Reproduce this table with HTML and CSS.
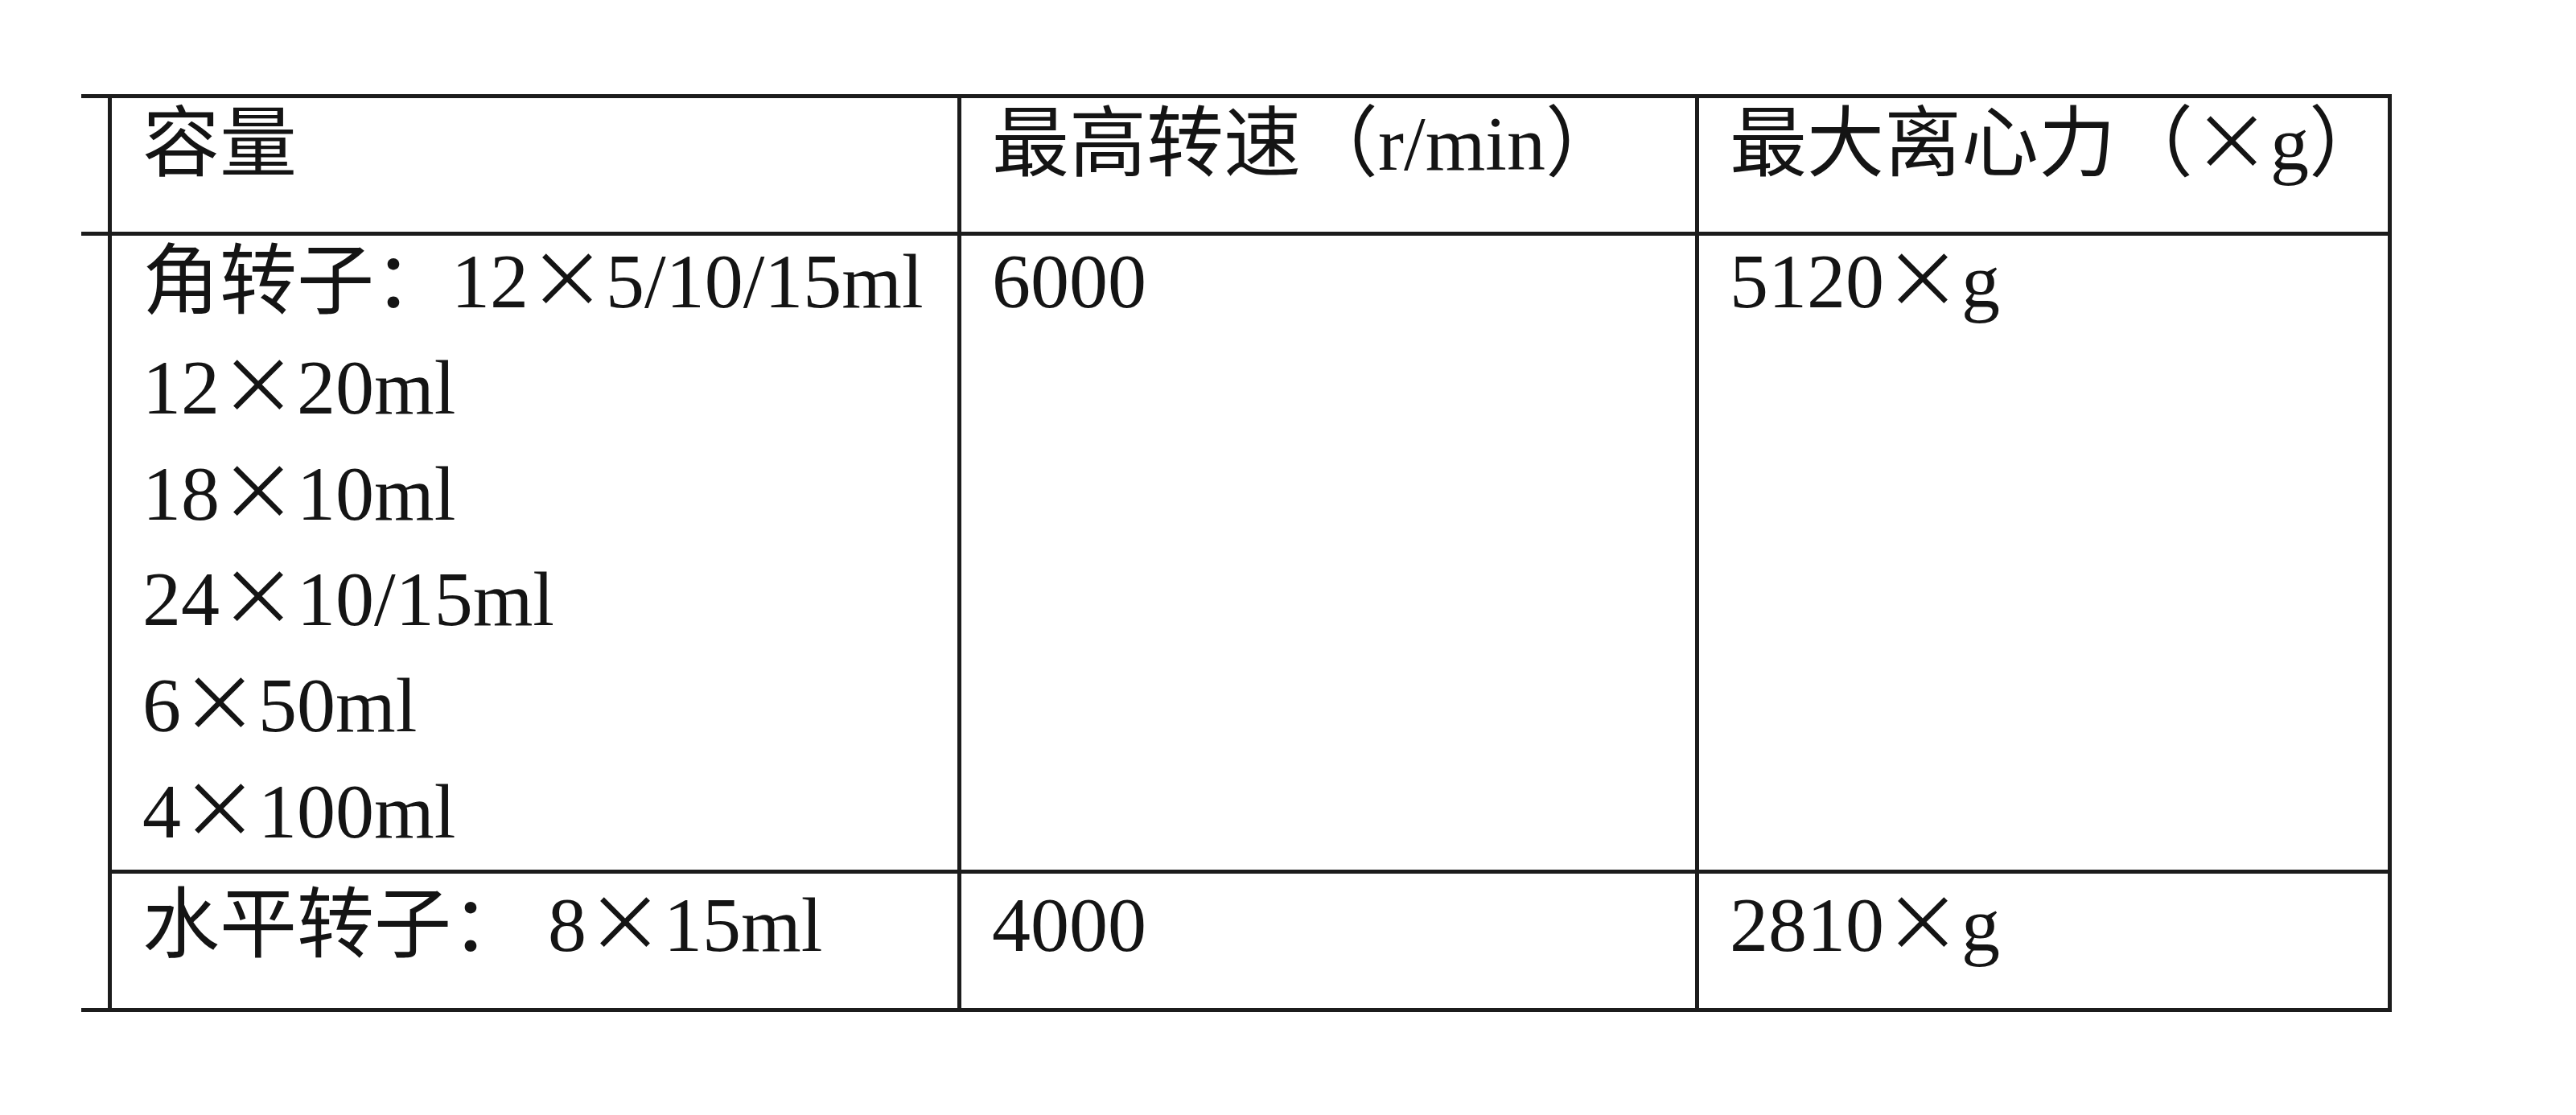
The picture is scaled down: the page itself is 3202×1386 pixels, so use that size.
FILE: index.html
```html
<!DOCTYPE html>
<html lang="zh-CN">
<head>
<meta charset="utf-8">
<title>离心机参数</title>
<link rel="stylesheet" href="styles.css">
</head>
<body>
<div class="grid">
  <div class="stub stub-head"></div>
  <div class="cell head">容量</div>
  <div class="cell head">最高转速（r/min）</div>
  <div class="cell head">最大离心力（<span class="x">×</span>g）</div>

  <div class="stub stub-body"></div>
  <div class="cell lines">
    <div class="line">角转子<span class="colon">：</span>12<span class="x">×</span>5/10/15ml</div>
    <div class="line">12<span class="x">×</span>20ml</div>
    <div class="line">18<span class="x">×</span>10ml</div>
    <div class="line">24<span class="x">×</span>10/15ml</div>
    <div class="line">6<span class="x">×</span>50ml</div>
    <div class="line">4<span class="x">×</span>100ml</div>
  </div>
  <div class="cell">6000</div>
  <div class="cell">5120<span class="x">×</span>g</div>

  <div class="cell low">水平转子<span class="colon">：</span> 8<span class="x">×</span>15ml</div>
  <div class="cell low">4000</div>
  <div class="cell low">2810<span class="x">×</span>g</div>
</div>
</body>
</html>
```

FILE: styles.css
```css
html, body {
  margin: 0;
  padding: 0;
  background: #ffffff;
}

body {
  font-family: "Liberation Serif", "Noto Sans CJK SC", serif;
  font-size: 96px;
  line-height: 114px;
  color: #141414;
}

.grid {
  display: grid;
  width: max-content;
  grid-template-columns: 33px 1051px 912px 856px;
  grid-template-rows: 166px 788px 167px;
  gap: 5px;
  padding: 5px 5px 5px 0;
  margin: 117px 0 0 101px;
  background: #1c1c1c;
}

.stub {
  background: #ffffff;
  grid-column: 1;
}

.stub-head {
  grid-row: 1;
}

.stub-body {
  grid-row: 2 / 4;
}

.cell {
  background: #ffffff;
  padding: 0 20px 0 38px;
  white-space: nowrap;
}

.lines {
  display: flex;
  flex-direction: column;
  gap: 17.8px;
}

.line {
  height: 114px;
}

.low {
  padding-top: 7px;
}

.x {
  font-family: "Noto Sans CJK SC", sans-serif;
  font-feature-settings: "fwid" 1;
  line-height: 0;
}

.colon {
  font-family: "Noto Sans CJK TC", "Noto Sans CJK SC", sans-serif;
  line-height: 0;
}
```
